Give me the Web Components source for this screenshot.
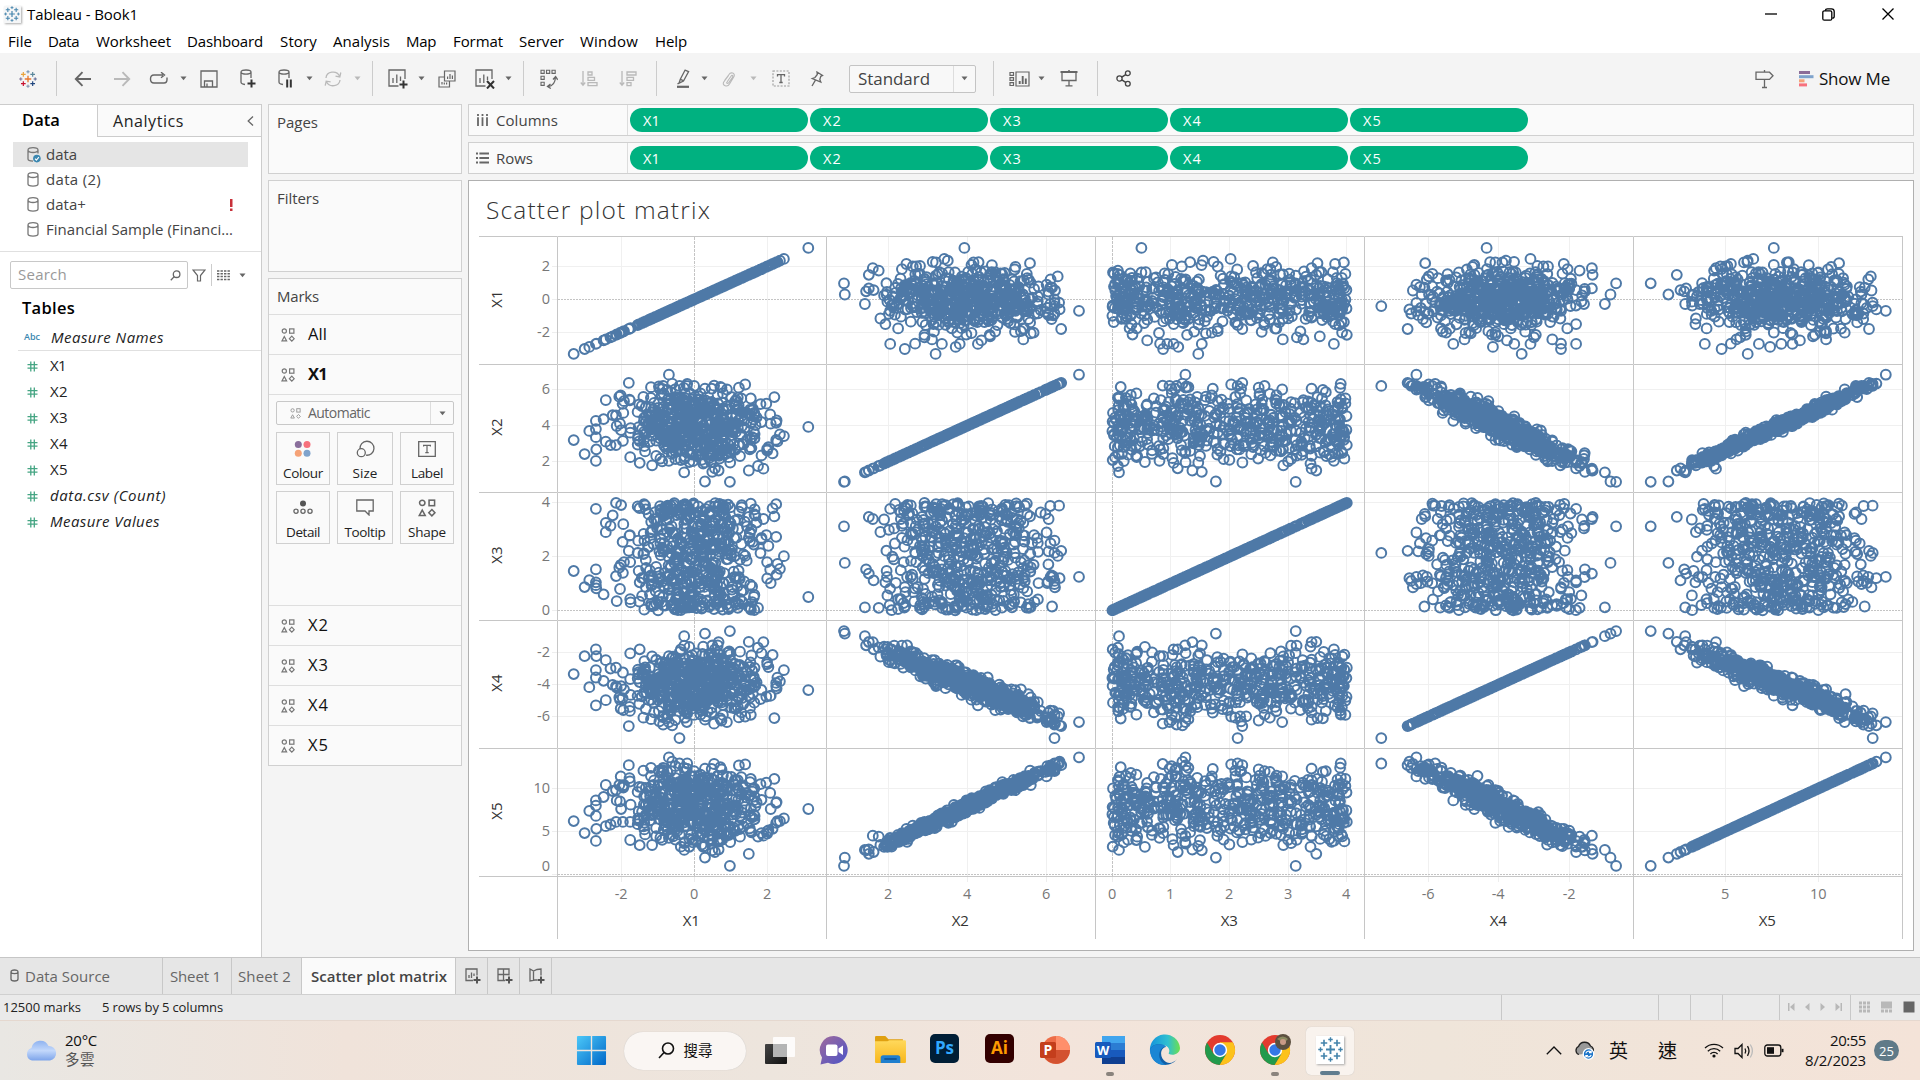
<!DOCTYPE html>
<html lang="en">
<head>
<meta charset="utf-8">
<title>Tableau - Book1</title>
<style>
html,body{margin:0;height:100%;overflow:hidden;background:#f4f4f4}
body{font-family:"Open Sans","Noto Sans CJK TC",sans-serif;font-size:15px;color:#333}
</style>
</head>
<body>
<tableau-app></tableau-app>
<script>
/* ---------- shared helpers ---------- */
const S = (w,h,body,attrs='') => `<svg width="${w}" height="${h}" viewBox="0 0 ${w} ${h}" fill="none" stroke="#666" stroke-width="1.3" ${attrs}>${body}</svg>`;
const T = (w,text,style='') => `<ui-text w="${w}" style="${style}">${text}</ui-text>`;
/* lays items left to right; each is [left, width, html] and gets the gap to its neighbour as a margin */
const strip = (items, start=0) => { let e=start; return items.map(([x,w,h])=>{const m=x-e; e=x+w; return `<span class="it" style="margin-left:${m}px;width:${w}px">${h}</span>`}).join('') };
const stripCss = `.it{flex:none;display:flex;align-items:center;justify-content:center}.it svg{display:block;flex:none}`;

class View extends HTMLElement{
  connectedCallback(){
    if(this.shadowRoot) return;
    this.attachShadow({mode:'open'}).innerHTML = `<style>*{box-sizing:border-box}:host{display:block;box-sizing:border-box}${this.css()}</style>${this.html()}`;
    this.ready && this.ready();
  }
  css(){return ''} html(){return '<slot></slot>'}
}

/* ---------- icons ---------- */
const plusLogo = (cols,k=1) => {
  const p=(x,y,r,c,w)=>`<path d="M${x-r} ${y}H${x+r}M${x} ${y-r}V${y+r}" stroke="${c}" stroke-width="${w}"/>`;
  return p(10,10,3.6,cols[0],1.5)+p(4.8,4.8,2.6,cols[1],1.3)+p(15.2,4.8,2.6,cols[2],1.3)+p(4.8,15.2,2.6,cols[3],1.3)+p(15.2,15.2,2.6,cols[4],1.3)
   +p(10,2,1.8,cols[5],1.1)+p(10,18,1.8,cols[6],1.1)+p(2,10,1.8,cols[7],1.1)+p(18,10,1.8,cols[8],1.1);
};
const blueLogo = plusLogo(Array(9).fill('#4484ac'));
const caret = c => S(7,5,`<path d="M.5 .5H6.5L3.5 4.3Z" fill="${c||'#666'}" stroke="none"/>`);
const cyl = (x=0,y=0)=>`<path d="M${x+1} ${y+3.5}V${y+12.5}C${x+1} ${y+15.2} ${x+11} ${y+15.2} ${x+11} ${y+12.5}V${y+3.5}M${x+1} ${y+3.5}C${x+1} ${y+.2} ${x+11} ${y+.2} ${x+11} ${y+3.5}S${x+1} ${y+6.8} ${x+1} ${y+3.5}"/>`;
const shapes = (s=14,c='#777')=>`<svg width="${s}" height="${s}" viewBox="0 0 14 14" fill="none" stroke="${c}" stroke-width="1.2"><circle cx="3.3" cy="3" r="2.1"/><rect x="8.6" y=".9" width="4.3" height="4.3"/><path d="M3.3 8.6L5.6 12.8H1Z"/><path d="M10.8 8.2L13.2 10.7L10.8 13.1L8.4 10.7Z"/></svg>`;
const L='#b9b9b9';
const I = {
  logo:S(18,18,plusLogo(['#e8762c','#e9a23b','#59879b','#c8102e','#1f457e','#6f8fae','#7b8cab','#7c7094','#5c6692'])).replace('viewBox="0 0 18 18"','viewBox="0 0 20 20"'),
  back:S(18,16,'<path d="M17 8H2M8.5 1.2L1.8 8L8.5 14.8" stroke-width="1.9"/>'),
  fwd:S(18,16,`<path d="M1 8H16M9.5 1.2L16.2 8L9.5 14.8" stroke="${L}" stroke-width="1.9"/>`),
  redo:S(20,14,'<path d="M14 3H5Q1.5 3 1.5 7T5 11H15Q18 11 18 7.5V5.5M12 .2L15.5 3L12 5.8" stroke-width="1.4"/>'),
  save:S(18,18,'<path d="M1 1H17V17H1ZM4.5 17V11H12.5V17M7 17V13.5"/>'),
  dbplus:S(16,19,'<path d="M1 3V13Q1 15 5 15.5M11 3V9M1 3C1 .3 11 .3 11 3S1 5.7 1 3"/><path d="M11.5 10.5V18.5M7.5 14.5H15.5" stroke="#333" stroke-width="2"/>'),
  dbpause:S(16,19,'<path d="M1 3V13Q1 15 5 15.5M11 3V9M1 3C1 .3 11 .3 11 3S1 5.7 1 3"/><path d="M9.2 10.5V18.5M12.8 10.5V18.5" stroke="#333" stroke-width="2"/>'),
  refresh:S(18,16,`<path d="M2 7A7 6.2 0 0 1 15.5 5M16 9A7 6.2 0 0 1 2.6 11M16.8 1.5L15.8 6L11.5 5.2M1.2 14.6L2.2 10.2L6.6 10.8" stroke="${L}"/>`),
  sheetplus:S(21,20,'<path d="M10.5 17H1V1H17V10M5 14V9M8.8 14V5.5M12.5 12V7.5"/><path d="M15.5 11.5V19.5M11.5 15.5H19.5" stroke="#333" stroke-width="2"/>'),
  dup:S(18,18,'<path d="M6.5 1H17V11H6.5ZM6.5 7H1V17H11.5V11M4 14.5V12M6.3 14.5V12.5M8.6 14.5V12.5M9.6 9V6.5M12 9V4M14.4 9V5.5" stroke-width="1.2"/>'),
  clear:S(21,20,'<path d="M10.5 17H1V1H17V10M5 14V9M8.8 14V5.5M12.5 11V7.5"/><path d="M12 12L19 19.5M19 12L12 19.5" stroke="#333" stroke-width="2"/>'),
  swap:S(18,20,'<path d="M1 1.2H4.2V4.4H1ZM6.5 1.2H9.7V4.4H6.5ZM12 1.2H15.2V4.4H12ZM1 7.2H4.2V10.4H1ZM1 13.2H4.2V16.4H1Z" stroke-width="1.1"/><path d="M8 17.5Q15 17 15.5 8M13 10.5L15.6 7.5L17.7 10.8M10.5 15L7.5 17.5L10.8 19.5" stroke-width="1.3"/>'),
  asc:S(18,16,`<path d="M3 0V14M.8 11.5L3 14.3L5.2 11.5M8 1H12V4H8ZM8 6.3H14.5V9.3H8ZM8 11.7H17V14.7H8Z" stroke="${L}"/>`),
  desc:S(18,16,`<path d="M3 0V14M.8 11.5L3 14.3L5.2 11.5M8 1H17V4H8ZM8 6.3H14.5V9.3H8ZM8 11.7H12V14.7H8Z" stroke="${L}"/>`),
  pen:S(14,19,'<path d="M9 1.2L12.6 2.6L7.5 12L3 14.2L4.3 10.3ZM4.4 10.3L7.3 11.6M3 14L1.5 15"/><path d="M1 17.8H13" stroke-width="2.2"/>'),
  clip:S(14,16,`<path d="M2.5 9.5L7 3.5C8.5 1 13.5 1.5 12 5.5L7.5 13C5.5 16.5 0 14.8 1.6 11.2L6.6 4.4M5 11L9 5.2C10.5 3 11.5 5 10 7L6.8 11.6C5.6 13 4 12.4 5 11" stroke="${L}" stroke-width="1.1"/>`),
  text:S(18,17,'<rect x="1" y="1" width="16" height="15" stroke-dasharray="2 1.4" stroke="#999" stroke-width="1.1"/><path d="M5.5 6.5V4.7H12.5V6.5M9 4.7V12.5M7.3 12.5H10.7" stroke-width="1.3"/>'),
  pin:S(14,16,'<path d="M7 1L12.5 4.5L10.8 5.3L9.8 8.5L10.8 11L2.3 7.5L5 6.5L7.3 3.5ZM5.3 9.3L2 15" stroke-width="1.3"/>'),
  cards:S(21,16,'<path d="M1 1.5H4.5V4.3H1ZM1 6.6H4.5V9.4H1ZM1 11.7H4.5V14.5H1ZM7 1H20V15H7Z" stroke-width="1.2"/><path d="M10.7 13V10M13.7 13V5M16.8 13V7.5" stroke-width="1.9"/>'),
  present:S(18,17,'<path d="M2 2V10.5H16V2M9 10.5V15.5M5.5 15.8H12.5"/><path d="M.5 2H17.5M9 .2V2" stroke-width="2"/>'),
  share:S(16,17,'<circle cx="3.5" cy="8.5" r="2.6"/><circle cx="11.8" cy="3.2" r="2.4"/><circle cx="11.8" cy="13.8" r="2.4"/><path d="M5.8 7.2L9.7 4.6M5.8 9.8L9.7 12.4" stroke-width="1.5"/>','style="stroke:#444"'),
  sign:S(19,20,'<path d="M1 3.2H14.5L18 6.8L14.5 10.4H1ZM9.5 1V3M9.5 10.4V18.5M7 18.5H12"/>'),
  showme:S(15,16,'<g stroke="none"><rect width="11" height="3" fill="#8c6d98"/><rect y="4.2" width="14.5" height="3" fill="#7fa3cc"/><rect y="8.3" width="5.5" height="3" fill="#f5a277"/><rect y="12.4" width="8" height="3" fill="#f7717d"/></g>')
};

/* ---------- window title + menu ---------- */
class WindowBar extends View{
  css(){return `:host{height:53px;background:#fff;color:#000}.row{display:flex;align-items:center;height:28px;--lift:0px}.menu{height:27px;--lift:2px}${stripCss}.app{box-shadow:1px 1px 2px #aaa;background:#f5f6f7;width:17px;height:17px;display:flex;align-items:center;justify-content:center}`}
  html(){
    const menus=[['File',8,24],['Data',48,31],['Worksheet',96,75],['Dashboard',187,76],['Story',280,37],['Analysis',333,57],['Map',406,30],['Format',453,50],['Server',519,45],['Window',580,58],['Help',655,32]];
    return `<div class="row">${strip([
      [3,18,`<span class="app"><svg width="16" height="16" viewBox="0 0 20 20">${blueLogo}</svg></span>`],
      [27,111,T(111,'Tableau - Book1')],
      [1765,12,S(12,12,'<path d="M0 6H12" stroke="#000"/>')],
      [1822,13,S(13,13,'<rect x=".8" y="2.8" width="9" height="9.4" rx="1.5"/><path d="M3.5 2.8Q3.5 .8 5.5 .8H9.5Q12.2 .8 12.2 3.5V8.5Q12.2 10.2 10.2 10.2"/>','style="stroke:#000"')],
      [1882,12,S(12,12,'<path d="M.5 .5L11.5 11.5M11.5 .5L.5 11.5" stroke="#000"/>')]])}</div>
      <div class="row menu">${strip(menus.map(([t,x,w])=>[x,w,T(w,t)]))}</div>`}
}

/* ---------- toolbar ---------- */
class ToolBar extends View{
  css(){return `:host{height:51px;background:#f4f4f4;display:flex;align-items:center;--lift:1px}${stripCss}.sep{width:1px;height:35px;background:#ccc}
   .sel{width:127px;height:28px;border:1px solid #c4c4c4;border-radius:2px;background:#f8f8f8;display:flex;align-items:center;padding-left:8px;font-size:17px;color:#444}
   .sel b{margin-left:auto;width:22px;height:100%;border-left:1px solid #ddd;display:flex;align-items:center;justify-content:center}`}
  html(){
    const ic=(cx,w,h)=>[cx-w/2,w,h], sep=x=>[x,1,'<i class="sep"></i>'], ca=(x,c)=>[x-3.5,7,caret(c)];
    return strip([ic(27.5,18,I.logo),sep(56),ic(83,18,I.back),ic(122,18,I.fwd),ic(159,20,I.redo),ca(183.5),ic(209,18,I.save),ic(248,16,I.dbplus),ic(286,16,I.dbpause),ca(309.5),ic(332.5,18,I.refresh),ca(357.5,L),
    sep(372),ic(398,21,I.sheetplus),ca(421.5),ic(446.5,18,I.dup),ic(485,21,I.clear),ca(508.5),sep(523),ic(549,18,I.swap),ic(589,18,I.asc),ic(628,18,I.desc),
    sep(656),ic(683,14,I.pen),ca(704.5),ic(729,14,I.clip),ca(753.5,L),ic(780.5,18,I.text),ic(817,14,I.pin),
    [849,127,`<div class="sel">${T(72,'Standard')}<b>${caret()}</b></div>`],sep(993),ic(1019.5,21,I.cards),ca(1041.5),ic(1068.5,18,I.present),sep(1097),ic(1124,16,I.share),
    ic(1764.5,19,I.sign),[1799,15,I.showme],[1819,71,T(71,'Show Me','font-size:17px;color:#111')]])}
}

/* ---------- data pane ---------- */
class DataPane extends View{
  css(){return `:host{width:262px;background:#fff;border-right:1px solid #ccc;border-top:1px solid #ccc;flex:none;display:flex;flex-direction:column}
  .tabs{display:flex;height:32px}.t1{width:97px;padding-left:22px;display:flex;align-items:center;font-weight:600;font-size:16.5px;color:#000;padding-bottom:1px}
  .t2{flex:1;background:#fafafa;border-left:1px solid #ccc;border-bottom:1px solid #ccc;display:flex;align-items:center;padding:0 7px 0 15px;justify-content:space-between;font-size:16px;color:#222;--lift:0px}
  .src{padding:5px 13px 0 13px;height:114px}.src div{height:25px;display:flex;align-items:center;padding-left:14px;color:#444}.src svg{margin-right:7px;flex:none}.src .on{background:#e5e5e5}.src .on svg{margin-right:5px}
  .src em{margin-left:auto;margin-right:16px;width:2.5px}
  .find{border-top:1px solid #e0e0e0;height:46px;padding:9px 0 8px 10px;display:flex;align-items:center}
  .box{width:178px;height:28px;border:1px solid #c8c8c8;border-radius:2px;display:flex;align-items:center;justify-content:space-between;padding:0 6px 0 7px;color:#999}
  .find i{width:1px;height:22px;background:#ccc;margin:0 5px}
  h4{margin:0;padding:0 0 0 22px;height:22px;display:flex;align-items:center;font-size:16.5px;font-weight:600;color:#000}
  .f{height:26px;display:flex;align-items:center;color:#222}.f span{width:50px;padding-left:22px;display:flex}.f span svg{margin-left:4.5px}
  .mn{margin:6px 0 2px 18px;border-bottom:1px solid #e0e0e0;height:26px}.mn span{width:33px;padding-left:6px}`}
  html(){
    const db=S(12,17,cyl(0,.5),'style="stroke:#777"'), dbc=S(14,17,'<path d="M6 15.1C3 15 1 14.2 1 13V4M11 4V7.5M1 4C1 .7 11 .7 11 4S1 7.3 1 4" stroke="#777"/><circle cx="9.9" cy="12.6" r="3.8" fill="#3b87b0" stroke="none"/><path d="M8 12.7L9.4 14.1L11.9 11.2" stroke="#fff" stroke-width="1.1"/>');
    const hash=S(11,11,'<path d="M3.8 .5V10.5M7.3 .5V10.5M.5 3.7H10.5M.5 7.2H10.5" stroke="#45a583" stroke-width="1.3"/>');
    const f=(t,w,i)=>`<div class="f"><span>${hash}</span>${T(w,t,i?'font-style:italic':'')}</div>`;
    return `<div class="tabs"><div class="t1">${T(38,'Data')}</div><div class="t2">${T(71,'Analytics')}${S(7,10,'<path d="M6 .5L1.2 5L6 9.5"/>')}</div></div>
    <div class="src"><div class="on">${dbc}${T(31,'data')}</div><div>${db}${T(55,'data (2)')}</div>
    <div>${db}${T(40,'data+')}<em>${S(3,12,'<path d="M0 0H2.5V8H0ZM0 9.5H2.5V12H0Z" fill="#c8313a" stroke="none"/>')}</em></div><div>${db}${T(187,'Financial Sample (Financi…')}</div></div>
    <div class="find"><div class="box">${T(49,'Search')}${S(11,11,'<circle cx="6.6" cy="4.2" r="3.3"/><path d="M4.2 6.6L.8 10.2"/>')}</div>
    ${S(14,13,'<path d="M1 1H13L8.5 6.5V12H5.5V6.5Z" stroke-width="1.2"/>').replace('<svg','<svg style="margin-left:4px"')}<i></i>${S(13,11,'<path d="M0 1H13M0 3.8H13M0 6.6H13M0 9.4H13" stroke-dasharray="2.4 1.1" stroke-width="1.5"/>')}<span style="margin-left:9px;display:flex">${caret()}</span></div>
    <h4>${T(53,'Tables')}</h4>
    <div class="f mn"><span>${T(16,'Abc','color:#3b87b0;font-size:9px;font-weight:600')}</span>${T(113,'Measure Names','font-style:italic')}</div>
    ${['X1','X2','X3','X4','X5'].map((t,i)=>f(t,i?18:16)).join('')}${f('data.csv (Count)',116,1)}${f('Measure Values',110,1)}`}
}

/* ---------- cards column ---------- */
class MarkButton extends View{
  css(){return `:host{height:53px;border:1px solid #d0d0d0;background:#fafafa;display:flex;flex-direction:column;align-items:center;font-size:13.5px;color:#222}.i{height:33px;display:flex;align-items:center}`}
  html(){return `<span class="i">${MARKS[this.getAttribute('icon')]}</span><slot></slot>`}
}
const MARKS={
 Colour:S(18,18,'<g stroke="none"><circle cx="4.3" cy="4.5" r="3.5" fill="#8a6f9c"/><circle cx="13" cy="4.5" r="3.5" fill="#f7717d"/><circle cx="4.3" cy="13.2" r="3.5" fill="#f5a277"/><circle cx="13" cy="13.2" r="3.5" fill="#7fa3cc"/></g>'),
 Size:S(19,18,'<path d="M4 9A7 7 0 1 1 10 15.2"/><circle cx="5.3" cy="12.7" r="4"/>'),
 Label:S(18,16,'<path d="M.7 .7H17.3V15.3H.7Z"/><path d="M5.6 5.6V4.4H12.4V5.6M9 4.4V11.6M7.3 11.7H10.7" stroke-width="1.2"/>'),
 Detail:S(20,15,'<circle cx="10" cy="3.6" r="3" fill="#555" stroke="none"/><circle cx="3" cy="11.2" r="2.1"/><circle cx="10" cy="11.2" r="2.1"/><circle cx="17" cy="11.2" r="2.1"/>'),
 Tooltip:S(18,17,'<path d="M.8 1H17.2V12H13V16L9 12H.8Z"/>'),
 Shape:shapes(18,'#666')
};
class CardsColumn extends View{
  css(){return `:host{width:194px;flex:none;display:flex;flex-direction:column;gap:6px;margin-left:6px;color:#444}
  .c{border:1px solid #d0d0d0;background:#fafafa;padding:7px 0 0 8px}.p{height:70px}.f{height:92px}.m{height:488px;padding:0}
  .m>.h{height:35px;padding:7px 0 0 8px}.r{height:40px;border-top:1px solid #dedede;display:flex;align-items:center;padding-left:12px;gap:13px;font-size:16.5px;color:#111}
  .b{border-top:1px solid #dedede;height:211px;padding:6px 7px 0}
  .sel{height:24px;border:1px solid #c8c8c8;border-radius:2px;display:flex;align-items:center;padding-left:13px;gap:7px;font-size:14px;color:#666}.sel b{margin-left:auto;border-left:1px solid #ddd;width:23px;height:100%;display:flex;align-items:center;justify-content:center}
  .g{display:grid;grid-template-columns:54px 56px 54px;justify-content:space-between;row-gap:6px;margin-top:7px}`}
  html(){const r=(t,w,s='')=>`<div class="r">${shapes(14)}${T(w,t,s)}</div>`, mb=(t,w)=>`<mark-button icon="${t}">${T(w,t)}</mark-button>`;
   return `<div class="c p">${T(41,'Pages')}</div><div class="c f">${T(42,'Filters')}</div>
   <div class="c m"><div class="h">${T(42,'Marks')}</div>${r('All',19)}${r('X1',19,'font-weight:700')}
   <div class="b"><div class="sel">${shapes(11,'#999')}${T(62,'Automatic')}<b>${caret()}</b></div>
   <div class="g">${mb('Colour',40)}${mb('Size',25)}${mb('Label',32)}${mb('Detail',34)}${mb('Tooltip',41)}${mb('Shape',38)}</div></div>
   ${r('X2',21)}${r('X3',21)}${r('X4',21)}${r('X5',21)}</div>`}
}

/* ---------- shelves ---------- */
class FieldPill extends View{
  css(){return `:host{width:178px;height:24px;border-radius:12px;background:#00b180;color:#fff;font-size:14.5px;display:flex;align-items:center;padding-left:13px;flex:none;--lift:0px}`}
}
class FieldShelf extends View{
  css(){return `:host{height:32px;border:1px solid #d0d0d0;background:#fafafa;display:flex;align-items:center;color:#444;--lift:0px}.l{width:159px;height:100%;border-right:1px solid #ddd;display:flex;align-items:center;padding-left:7px}.l svg{width:13px;margin-right:7px}.p{display:flex;gap:2px;padding-left:2px}`}
  html(){const c=this.getAttribute('label')==='Columns';
   const ic=c?S(13,12,'<path d="M2 0V2M6.5 0V2M11 0V2M2 3.2V12M6.5 3.2V12M11 3.2V12" stroke-width="1.8"/>'):S(13,12,'<path d="M0 1.5H2M0 6H2M0 10.5H2M3.4 1.5H13M3.4 6H13M3.4 10.5H13" stroke-width="1.8"/>');
   return `<div class="l">${ic}${T(c?62:37,c?'Columns':'Rows')}</div><div class="p">${[1,2,3,4,5].map(i=>`<field-pill>${T(i>1?19:17,'X'+i)}</field-pill>`).join('')}</div>`}
}

/* ---------- scatter plot matrix ---------- */
const AX=[ // a: anchor value; x / y: pixel of the anchor inside a pane; sx / sy: pixels per unit
 {n:'X1',a:0,x:137.1,sx:36.5,y:63.5,sy:16.5,tx:[-2,0,2],ty:[2,0,-2]},
 {n:'X2',a:4,x:141.6,sx:39.5,y:61.5,sy:18,tx:[2,4,6],ty:[6,4,2]},
 {n:'X3',a:0,x:17,sx:58.7,y:118.5,sy:26.9,tx:[0,1,2,3,4],ty:[4,2,0]},
 {n:'X4',a:-4,x:134.9,sx:35.1,y:64.5,sy:16,tx:[-6,-4,-2],ty:[-2,-4,-6]},
 {n:'X5',a:5,x:92.3,sx:18.66,y:83.4,sy:8.6,tx:[5,10],ty:[10,5,0]}];
const PTS=(()=>{
  let s=20230208; const u=()=>{s|=0;s=s+0x6D2B79F5|0;let t=Math.imul(s^s>>>15,1|s);t=t+Math.imul(t^t>>>7,61|t)^t;return((t^t>>>14)>>>0)/4294967296};
  const g=()=>Math.sqrt(-2*Math.log(u()+1e-9))*Math.cos(2*Math.PI*u());
  const p=[
  [3.13,3.92,.5,-4.35,7.6],[2.46,3.41,2.02,-3.1,6.5],[-3.3,3.19,1.47,-3.35,6.2],[-3,2.41,.87,-2.23,4.8],[-2.87,3.7,1.13,-4.17,7.4],
  [-2.69,2.04,3.78,-1.8,3.9],[-2.69,3.35,1.53,-3.1,6.8],[-2.69,3.8,1.05,-3.56,8],[-2.69,4.26,.94,-5.3,8.6],[-2.68,2.67,.82,-2.23,5.3],
  [-2.48,4.35,.6,-3.77,9],[-2.42,5.41,3.26,-4.98,10.4],[-2.42,3.1,2.91,-2.48,5.6],[-2.29,2.91,3.15,-3,5.8],[-2.23,4.57,3.54,-4.02,9.7],
  [-2.14,2.91,4,-2.95,6.1],[-2.14,4.56,1.28,-4.1,9.8],[-2.12,3.97,.35,-4.2,8.6],[-2.05,5.6,1.6,-4.8,10.4],[-2.01,5.67,1.7,-5.5,11.4],
  [-2.03,4.1,.8,-4.95,8.5],[-2,3.74,3.92,-4.1,7.6],[-1.96,5.2,2.55,-4.85,10.3],[-1.94,4.7,3.21,-5.6,10.1],[-1.95,3.15,1.4,-3.25,6.1],[-1.92,5.35,1.8,-4.3,10.4],
  [-1.79,6.37,2.22,-6.6,12.7],[-1.77,5.44,2.78,-5.4,11.2],[-1.76,5.4,2.8,-5.65,10.8],[-1.75,2.24,.42,-2.05,4],[-1.75,3.6,1.8,-3.66,6.1],[-1.74,3.85,.3,-4.65,8.1],
  [-1.49,1.92,1.05,-1.8,3.4],[-.69,6.82,1.25,-6.35,13.6],[.98,.87,3.13,-.66,1],[.3,.89,1.77,-.82,1.95],[-.4,6.2,2.14,-7.35,12.9],
  [1.5,1.5,3.48,-1.33,2.4],[-.27,1.4,.12,-.98,2.85],[.5,1.43,1.53,-1.55,2.8],[.67,1.5,1.37,-1.35,2.9],[.57,1.62,1.12,-1.8,2.6],
  [1.4,6.28,2.03,-6,12.8],[2.2,5.58,3.5,-6.1,11.1],[2.25,4.15,2.74,-3.9,8.3],[2.25,3.2,3.95,-4.1,6],[2.15,2.45,3.8,-2.15,5.3],[2.1,4.1,1.02,-4.7,7.6],
  [2.35,3.5,1.55,-3.8,6.2],[2,2.7,1.8,-2.6,5],[1.9,1.6,3.4,-1.35,4.5],[1.75,1.75,.1,-1.7,4.4],
  [-.85,6.2,1.1,-6.5,12.4],[-.6,6.33,1.2,-6.55,13.1],[-.2,6.2,.98,-6.35,12.3],[0,6.2,2.6,-5.9,12],[.3,6.05,3.4,-6.2,12.3],[.75,6.1,2.5,-6.25,12.2],[-.95,6.05,2.2,-6.3,12],[.9,6,2.9,-6.35,11.4]];
  while(p.length<545){
    const a=g()*.96, b=3.95+g()*1.06-.08*a, c=u()*4;
    if(a<-1.6||a>2.3||b<1.75||b>6.35||Math.hypot(a/2.5,(b-3.95)/2.5)>1) continue;
    let n=g()*.36; if(Math.abs(n)>.9) n*=.6;
    const d=-b*.98-.02+n, e=2.16*b-.72+g()*.28-n*.4;
    if(e<3.2) continue;
    p.push([a,b,c,d,e]);
  }
  return p;
})();
const px=(k,v)=>AX[k].x+(v-AX[k].a)*AX[k].sx, py=(k,v)=>AX[k].y-(v-AX[k].a)*AX[k].sy;
class ScatterPane extends View{
  css(){return `:host{width:269px;height:128px}svg{display:block;overflow:visible}`}
  html(){
    const c=+this.getAttribute('col'), r=+this.getAttribute('row');
    let o='';
    for(const v of AX[c].tx){const x=Math.round(px(c,v)-.5)+.5;o+=`<path d="M${x} 1V128" ${v===0?'stroke="#c4c4c4" stroke-dasharray="3 1"':'stroke="#f0f0f0"'}/>`}
    for(const v of AX[r].ty){const y=Math.round(py(r,v)-.5)+.5;o+=`<path d="M1 ${y}H269" ${v===0?'stroke="#c4c4c4" stroke-dasharray="2 1"':'stroke="#f0f0f0"'}/>`}
    let d='';
    for(const q of PTS){d+=`M${(px(c,q[c])-4.9).toFixed(1)} ${py(r,q[r]).toFixed(1)}a4.9 4.9 0 1 0 9.8 0a4.9 4.9 0 1 0 -9.8 0`}
    return `<svg width="269" height="128" fill="none">${o}<path d="M.5 128V.5H269" stroke="#c6c6c6"/><path d="${d}" stroke="#4e79a7" stroke-width="2"/></svg>`}
}
class AxisY extends View{
  css(){return `:host{width:78px;height:128px;border-top:1px solid #c6c6c6}svg{display:block;margin-top:-1px}text{font-size:14.5px;fill:#777}text.n{fill:#333;font-size:15px}`}
  html(){const r=+this.getAttribute('row'),a=AX[r];
   return `<svg width="78" height="128">${a.ty.map(v=>{const y=Math.round(py(r,v)-.5)+.5;return `<path d="M73 ${y}H78" stroke="#eee"/><text x="71" y="${Math.min(y,118)+4.6}" text-anchor="end">${v}</text>`}).join('')}<text class="n" transform="translate(23 63) rotate(-90)" text-anchor="middle">${a.n}</text></svg>`}
}
class AxisX extends View{
  css(){return `:host{width:269px;height:63px;border-top:1px solid #c6c6c6;border-left:1px solid #c6c6c6}svg{display:block;margin:-1px 0 0 -1px;overflow:visible}text{font-size:14.5px;fill:#777;text-anchor:middle}text.n{fill:#333;font-size:15px}`}
  html(){const c=+this.getAttribute('col'),a=AX[c];
   return `<svg width="269" height="63">${a.tx.map(v=>{const x=Math.round(px(c,v)-.5)+.5;return `<path d="M${x} 1V6" stroke="#eee"/><text x="${x-.3}" y="22.6">${v}</text>`}).join('')}<text class="n" x="134.3" y="49.8">${a.n}</text></svg>`}
}
class PlotMatrix extends View{
  css(){return `:host{border:1px solid #b0b0b0;background:#fff;height:771px;padding:9px 10px}
   .t{height:46px;padding-left:7px;display:flex;align-items:center;padding-bottom:6px;font-size:24.5px;font-weight:300;color:#333}
   .g{display:grid;grid-template-columns:78px repeat(5,269px);grid-template-rows:repeat(5,128px) 63px;border-right:1px solid #c6c6c6;width:1424px}.k{border-top:1px solid #c6c6c6}`}
  html(){const n=[0,1,2,3,4];
   return `<div class="t">${T(225,'Scatter plot matrix')}</div><div class="g">${n.map(r=>`<axis-y row="${r}"></axis-y>`+n.map(c=>`<scatter-pane row="${r}" col="${c}"></scatter-pane>`).join('')).join('')}<div class="k"></div>${n.map(c=>`<axis-x col="${c}"></axis-x>`).join('')}</div>`}
}

/* ---------- sheet tabs + status ---------- */
class SheetTabs extends View{
  css(){return `:host{height:38px;background:#e6e6e6;border-top:1px solid #c6c6c6;border-bottom:1px solid #d0d0d0;display:flex;color:#666;font-size:15px;--lift:0px}
   div{border-right:1px solid #c8c8c8;display:flex;align-items:center;padding-left:9px;flex:none}.a{background:#fafafa;font-weight:600;color:#444;--lift:1px}`}
  html(){const pl='<path d="M12 8.5V15.5M8.5 12H15.5" stroke-width="2" stroke="#555"/>';
   return `<div style="width:163px;padding-left:10px">${S(9,14,'<path d="M1 3V10Q1 12 4.5 12T8 10V3Q8 1 4.5 1T1 3Q1 4.6 4.5 4.6T8 3"/>').replace('<svg','<svg style="margin-right:6px"')}${T(85,'Data Source')}</div><div style="width:69px;padding-left:7px">${T(51,'Sheet 1')}</div><div style="width:70px;padding-left:6px">${T(53,'Sheet 2')}</div><div class="a" style="width:154px;padding-left:9px">${T(136,'Scatter plot matrix')}</div>
   <div style="width:32px">${S(16,16,'<path d="M8 12.5H1V1H12V7.5M4 10V7M6.5 10V4.5M9 8V5.5"/>'+pl)}</div><div style="width:32px">${S(16,16,'<path d="M8 12.5H1V1H12V7.5M1 6.5H12M6.5 1V12.5"/>'+pl)}</div><div style="width:32px">${S(16,16,'<path d="M8 12H6L1 13V1L4.5 3L8 1.5L12 1V7.5M4.5 3V12.5"/>'+pl)}</div>`}
}
class StatusBar extends View{
  css(){return `:host{height:25px;background:#eaeaea;display:flex;align-items:center;font-size:13px;color:#222}${stripCss}.s{width:1px;height:25px;background:#c8c8c8}.it svg{margin-bottom:2px}`}
  html(){const s=x=>[x,1,'<i class="s"></i>'],k='fill="#b8b8b8" stroke="none"';
   const ic=(cx,b,w=12)=>[cx-w/2,w,S(w,12,b)];
   return strip([[3,78,T(78,'12500 marks')],[102,121,T(121,'5 rows by 5 columns')],s(1501),s(1658),s(1690),s(1722),s(1779),
    ic(1791,`<path d="M3 2H4.5V10H3ZM9.5 2V10L5 6Z" ${k}/>`),ic(1807,`<path d="M8.5 2V10L4 6Z" ${k}/>`),ic(1823,`<path d="M3.5 2V10L8 6Z" ${k}/>`),ic(1839,`<path d="M2.5 2V10L7 6ZM7.5 2H9V10H7.5Z" ${k}/>`),s(1850),
    ic(1865,`<path d="M0 .5H3V3.5H0ZM4 .5H7V3.5H4ZM8 .5H11V3.5H8ZM0 4.5H3V7.5H0ZM4 4.5H7V7.5H4ZM8 4.5H11V7.5H8ZM0 8.5H3V11.5H0ZM4 8.5H7V11.5H4ZM8 8.5H11V11.5H8Z" ${k}/>`),
    ic(1887,`<path d="M0 .5H11V7.5H0ZM0 8.5H3V11.5H0ZM4 8.5H7V11.5H4ZM8 8.5H11V11.5H8Z" ${k}/>`),ic(1909,'<path d="M.5 .5H11.5V11.5H.5Z" fill="#666" stroke="none"/>')])}
}

/* ---------- desktop taskbar ---------- */
const defs=`<defs><linearGradient id="w" x2="1" y2="1"><stop stop-color="#4cc8f8"/><stop offset="1" stop-color="#0067c8"/></linearGradient><linearGradient id="ch" x2="1" y2="1"><stop stop-color="#a06a9c"/><stop offset="1" stop-color="#4b53c8"/></linearGradient><linearGradient id="fo" x2="0" y2="1"><stop stop-color="#ffd95c"/><stop offset="1" stop-color="#f8b71c"/></linearGradient><linearGradient id="ed" x2="1"><stop stop-color="#1593dc"/><stop offset=".6" stop-color="#30c0d0"/><stop offset="1" stop-color="#6de04e"/></linearGradient><linearGradient id="cl" x2="0" y2="1"><stop stop-color="#8fb3f0"/><stop offset=".5" stop-color="#c3d8fb"/><stop offset="1" stop-color="#7da4ea"/></linearGradient><linearGradient id="tv" x2="1" y2="1"><stop stop-color="#444"/><stop offset="1" stop-color="#111"/></linearGradient></defs>`;
const A=(w,b)=>`<svg width="${w}" height="${w}" viewBox="0 0 32 32">${defs}${b}</svg>`;
const chrome=`<circle cx="16" cy="16" r="15" fill="#e33b2e"/><path d="M29 8.5A15 15 0 0 1 15.5 31L22.5 19.5L16 8.5Z" fill="#fcc21b"/><path d="M3 8.5L9.6 19.7L22.4 19.7L15.5 31A15 15 0 0 1 3 8.5Z" fill="#229a4c"/><path d="M29 8.5H16L22 20Z" fill="#fcc21b"/><circle cx="16" cy="16" r="7.2" fill="#fff"/><circle cx="16" cy="16" r="5.7" fill="#3578e5"/>`;
const APPS={
 start:A(31,'<path d="M1 2Q1 1 2 1H15.3V15.3H1ZM16.7 1H30Q31 1 31 2V15.3H16.7ZM1 16.7H15.3V31H2Q1 31 1 30ZM16.7 16.7H31V30Q31 31 30 31H16.7Z" fill="url(#w)"/>'),
 task:A(32,'<rect x="1" y="10" width="22" height="20" rx="1" fill="url(#tv)"/><rect x="9" y="3" width="22" height="20" rx="1" fill="#fff" opacity=".85"/><path d="M9 10H23V23H9Z" fill="#b4b4b4"/>'),
 chat:A(32,'<path d="M16 2A14 14 0 1 1 10 28.8L2.5 30.5L4 23.5A14 14 0 0 1 16 2Z" fill="url(#ch)"/><rect x="8" y="10.5" width="11.5" height="11.5" rx="2" fill="#fff"/><path d="M20.5 14.5L25 11.5V21L20.5 18Z" fill="#fff"/>'),
 folder:A(33,'<path d="M1 4Q1 3 2 3H11L14 6H28V12H1Z" fill="#e0a010"/><path d="M1 8H13L15 7H30Q31 7 31 8V28Q31 29 30 29H2Q1 29 1 28Z" fill="url(#fo)"/><path d="M6.5 29V24Q6.5 21.5 9 21.5H23Q25.5 21.5 25.5 24V29Z" fill="#1f7fce"/><path d="M10 25.2H22" stroke="#0d4f90" stroke-width="1.5"/>'),
 ps:A(32,'<rect x="1" y="0" width="29" height="29" rx="5" fill="#001e36"/><text x="15.5" y="20" font-size="17" font-weight="700" fill="#31a8ff" text-anchor="middle">Ps</text>'),
 ai:A(32,'<rect x="1" y="0" width="29" height="29" rx="5" fill="#330000"/><text x="15.5" y="20" font-size="17" font-weight="700" fill="#ff9a00" text-anchor="middle">Ai</text>'),
 ppt:A(32,'<circle cx="17" cy="16" r="14" fill="#ed6c47"/><path d="M17 2A14 14 0 0 1 31 16H17Z" fill="#ff8f6b"/><path d="M17 16H31A14 14 0 0 1 4 21Z" fill="#d35230"/><rect x="1" y="8" width="16" height="16" rx="1.5" fill="#c43e1c"/><text x="9" y="21" font-size="14" font-weight="700" fill="#fff" text-anchor="middle">P</text>'),
 word:A(32,'<rect x="8" y="2" width="23" height="28" rx="1.5" fill="#2b7cd3"/><path d="M8 2H31V9H8Z" fill="#41a5ee"/><path d="M8 16H31V23H8Z" fill="#185abd"/><path d="M8 23H31V30H8Z" fill="#103f91"/><rect x="1" y="8" width="16" height="16" rx="1.5" fill="#185abd"/><text x="9" y="20.7" font-size="13" font-weight="700" fill="#fff" text-anchor="middle">W</text>'),
 edge:A(32,'<path d="M1 17A15 15 0 0 1 31 14C31 20 24 22 20 20C19 19.5 21 18 20 15C18 10 8 9 1 17Z" fill="url(#ed)"/><path d="M1 16C3 9 14 9 17 13C11 14 10 24 17 28C21 30 25 28.5 28 25C22 34 3 34 1 16Z" fill="#0f5fa8"/><path d="M1 16C3 9 14 9 17 12.5C8 14 8 27 17 31C8 32 1 25 1 16Z" fill="#1b86d4"/>'),
 chrome:A(32,chrome),
 chrome2:A(32,chrome+'<circle cx="24" cy="8" r="8" fill="#5c5040"/><path d="M18 5Q24 0 29 5L25 9Z" fill="#8a8a60"/><circle cx="24" cy="8" r="3" fill="#c99a86"/>')
};
class TaskBar extends View{
  css(){return `:host{height:60px;background:linear-gradient(90deg,#e9e7e3 0,#f0e3da 18%,#ede5dd 40%,#f3e4db 55%,#efe5da 75%,#f4e3d8 100%);display:flex;align-items:center;color:#111;border-top:1px solid #e5d8cf}${stripCss}
   .col{display:flex;flex-direction:column;line-height:20px;padding-bottom:2px;--lift:0px}.pill{width:122px;height:38px;border-radius:19px;background:#faf6f3;display:flex;align-items:center;justify-content:center;gap:9px;box-shadow:0 0 1px #bbb;font-size:14.5px}
   .app{position:relative;height:50px;display:flex;align-items:center;justify-content:center;padding-bottom:2px}.app u{position:absolute;bottom:0;left:50%;width:8px;margin-left:-4px;height:4px;border-radius:2px;background:#8a837d}
   .act{width:48px;height:48px;background:#f9f3ee;border-radius:5px;box-shadow:0 0 1px #bbb}.act u{width:20px;margin-left:-10px;background:#607d8f;bottom:0}.tb{width:28px;height:28px;background:#fff;box-shadow:1px 1px 2px #aaa;display:flex;align-items:center;justify-content:center}
   .bd{width:25px;height:21px;border-radius:10.5px;background:#607a88;color:#fff;display:flex;align-items:center;justify-content:center;font-size:13px;--lift:0px}text{font-family:"Open Sans",sans-serif}`}
  html(){const ap=(cx,k,dot)=>[cx-17,34,`<span class="app">${APPS[k]}${dot?'<u></u>':''}</span>`];
   const st='style="stroke:#111"';
   return strip([[25,32,`<svg width="32" height="21" viewBox="0 0 32 21">${defs}<path d="M7 20.5A6.5 6.5 0 0 1 6.5 8A9 9 0 0 1 23.5 6A7.3 7.3 0 0 1 25 20.5Z" fill="url(#cl)"/></svg>`],
    [65,40,`<span class="col" style="align-items:flex-start;width:40px">${T(32,'20°C')}${T(30,'多雲','color:#555;font-size:14.5px')}</span>`],
    [576,31,APPS.start],[624,122,`<span class="pill">${S(17,17,'<circle cx="10" cy="6.5" r="5.5"/><path d="M6 10.5L1 16"/>','style="stroke:#111;stroke-width:1.6"')}<span>${T(29,'搜尋')}</span></span>`],
    ap(779.5,'task'),ap(834,'chat'),ap(890,'folder'),ap(945,'ps'),ap(1000,'ai'),ap(1054.5,'ppt'),ap(1110,'word',1),ap(1165,'edge'),ap(1220,'chrome'),ap(1275,'chrome2',1),
    [1306,48,`<span class="app act"><span class="tb"><svg width="25" height="25" viewBox="0 0 20 20">${blueLogo}</svg></span><u></u></span>`],
    [1546,16,S(16,9,'<path d="M.8 8.2L8 1L15.2 8.2"/>',st)],
    [1574,21,S(21,19,'<path d="M5 13.5A4.3 4.3 0 0 1 4.5 5.5A6.5 6.5 0 0 1 16.5 5A4.5 4.5 0 0 1 18.5 12" fill="#999" stroke="#222"/><circle cx="14.5" cy="13" r="5.3" fill="#1a73c8" stroke="#fff"/><path d="M11.8 12.3A3 3 0 0 1 17 11.3M17.2 13.8A3 3 0 0 1 12 14.8M17.2 9.5V11.6H15M11.8 16.5V14.5H14" stroke="#fff" stroke-width="1.1"/>')],
    [1608,21,T(19,'英','font-size:19px')],[1657,21,T(19,'速','font-size:19px')],
    [1704,20,S(20,15,'<path d="M1 5A13 13 0 0 1 19 5M3.8 8.2A9 9 0 0 1 16.2 8.2M6.4 11A5 5 0 0 1 13.6 11"/><circle cx="10" cy="13" r="1.6" fill="#111" stroke="none"/>',st)],
    [1734,20,S(20,16,'<path d="M1 5.5H4L8 1.5V14.5L4 10.5H1Z"/><path d="M11 5.5Q12.5 8 11 10.5M13.5 3.2Q16.5 8 13.5 12.8"/><path d="M16.3 1.5Q20.5 8 16.3 14.5" stroke="#bbb"/>',st)],
    [1764,20,S(20,13,'<rect x=".8" y="1" width="16" height="11" rx="2.5"/><rect x="3" y="3.2" width="7" height="6.6" fill="#111" stroke="none"/><path d="M17.5 4.8H19.5V8.2H17.5Z" fill="#111" stroke="none"/>',st)],
    [1790,76,`<span class="col" style="align-items:flex-end;width:76px">${T(36,'20:55')}${T(61,'8/2/2023')}</span>`],
    [1874,25,`<span class="bd">${T(15,'25')}</span>`]])}
}

/* ---------- page ---------- */
class TableauApp extends View{
  css(){return `:host{display:flex;flex-direction:column;width:1920px;height:1080px;overflow:hidden;background:#f4f4f4;--lift:2px}
  main{flex:none;height:853px;display:flex}.work{flex:1;margin:0 6px 0 6px;display:flex;flex-direction:column;gap:6px}`}
  html(){return `<window-bar></window-bar><tool-bar></tool-bar><main><data-pane></data-pane><cards-column></cards-column><div class="work"><field-shelf label="Columns"></field-shelf><field-shelf label="Rows"></field-shelf><plot-matrix></plot-matrix></div></main><sheet-tabs></sheet-tabs><status-bar></status-bar><task-bar></task-bar>`}
}

/* a single-line label tracked so that it is w pixels wide; --lift raises it when centred */
class UiText extends View{
  css(){return `:host{display:inline-block;white-space:nowrap;flex:none;padding-bottom:var(--lift,0px)}`}
  ready(){const w=+this.getAttribute('w'),n=[...this.textContent].length,now=this.getBoundingClientRect().width;
    if(w&&n) this.style.letterSpacing=((w-now)/n).toFixed(3)+'px'}
}
[['tableau-app',TableauApp],['window-bar',WindowBar],['tool-bar',ToolBar],['data-pane',DataPane],['cards-column',CardsColumn],['mark-button',MarkButton],['field-shelf',FieldShelf],['field-pill',FieldPill],['plot-matrix',PlotMatrix],['axis-y',AxisY],['axis-x',AxisX],['scatter-pane',ScatterPane],['sheet-tabs',SheetTabs],['status-bar',StatusBar],['task-bar',TaskBar],['ui-text',UiText]].forEach(([n,c])=>customElements.define(n,c));
</script>
</body>
</html>
